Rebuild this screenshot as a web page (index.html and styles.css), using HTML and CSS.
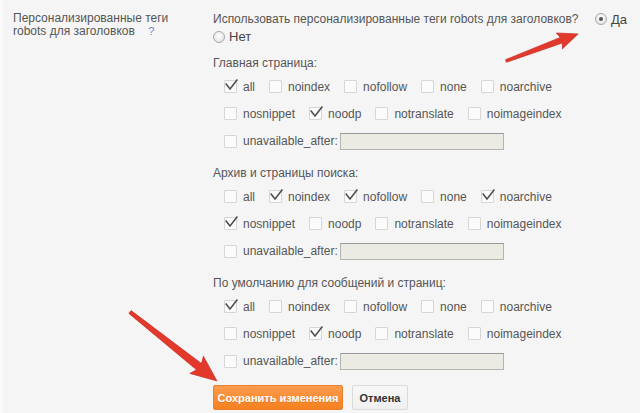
FILE: index.html
```html
<!DOCTYPE html>
<html lang="ru">
<head>
    <meta charset="UTF-8">
    <title>Персонализированные теги robots</title>
    <link rel="stylesheet" href="styles.css">
</head>
<body>
    <div class="page">
        <div class="setting">
            <div class="setting-label">
                Персонализированные теги<br>robots для заголовков <a class="help" href="#">?</a>
            </div>

            <div class="setting-body">
                <div class="question">
                    <span>Использовать персонализированные теги robots для заголовков?</span>
                    <label class="radio-item"><span class="radio is-checked"></span>Да</label>
                </div>
                <div class="question-no">
                    <label class="radio-item"><span class="radio"></span>Нет</label>
                </div>

                <!-- Главная страница -->
                <div class="section">
                    <div class="section-title">Главная страница:</div>
                    <div class="opts">
                        <div class="opt-row">
                            <label class="opt"><span class="cb is-checked"><svg viewBox="0 0 16 16"><path d="M2.7 6.6 L7 12 L14.4 2.6"/></svg></span>all</label>
                            <label class="opt"><span class="cb"></span>noindex</label>
                            <label class="opt"><span class="cb"></span>nofollow</label>
                            <label class="opt"><span class="cb"></span>none</label>
                            <label class="opt"><span class="cb"></span>noarchive</label>
                        </div>
                        <div class="opt-row">
                            <label class="opt"><span class="cb"></span>nosnippet</label>
                            <label class="opt"><span class="cb is-checked"><svg viewBox="0 0 16 16"><path d="M2.7 6.6 L7 12 L14.4 2.6"/></svg></span>noodp</label>
                            <label class="opt"><span class="cb"></span>notranslate</label>
                            <label class="opt"><span class="cb"></span>noimageindex</label>
                        </div>
                        <div class="opt-row opt-row-date">
                            <label class="opt opt-date"><span class="cb"></span>unavailable_after:</label>
                            <span class="date-input"></span>
                        </div>
                    </div>
                </div>

                <!-- Архив и страницы поиска -->
                <div class="section">
                    <div class="section-title">Архив и страницы поиска:</div>
                    <div class="opts">
                        <div class="opt-row">
                            <label class="opt"><span class="cb"></span>all</label>
                            <label class="opt"><span class="cb is-checked"><svg viewBox="0 0 16 16"><path d="M2.7 6.6 L7 12 L14.4 2.6"/></svg></span>noindex</label>
                            <label class="opt"><span class="cb is-checked"><svg viewBox="0 0 16 16"><path d="M2.7 6.6 L7 12 L14.4 2.6"/></svg></span>nofollow</label>
                            <label class="opt"><span class="cb"></span>none</label>
                            <label class="opt"><span class="cb is-checked"><svg viewBox="0 0 16 16"><path d="M2.7 6.6 L7 12 L14.4 2.6"/></svg></span>noarchive</label>
                        </div>
                        <div class="opt-row">
                            <label class="opt"><span class="cb is-checked"><svg viewBox="0 0 16 16"><path d="M2.7 6.6 L7 12 L14.4 2.6"/></svg></span>nosnippet</label>
                            <label class="opt"><span class="cb"></span>noodp</label>
                            <label class="opt"><span class="cb"></span>notranslate</label>
                            <label class="opt"><span class="cb"></span>noimageindex</label>
                        </div>
                        <div class="opt-row opt-row-date">
                            <label class="opt opt-date"><span class="cb"></span>unavailable_after:</label>
                            <span class="date-input"></span>
                        </div>
                    </div>
                </div>

                <!-- По умолчанию для сообщений и страниц -->
                <div class="section">
                    <div class="section-title">По умолчанию для сообщений и страниц:</div>
                    <div class="opts">
                        <div class="opt-row">
                            <label class="opt"><span class="cb is-checked"><svg viewBox="0 0 16 16"><path d="M2.7 6.6 L7 12 L14.4 2.6"/></svg></span>all</label>
                            <label class="opt"><span class="cb"></span>noindex</label>
                            <label class="opt"><span class="cb"></span>nofollow</label>
                            <label class="opt"><span class="cb"></span>none</label>
                            <label class="opt"><span class="cb"></span>noarchive</label>
                        </div>
                        <div class="opt-row">
                            <label class="opt"><span class="cb"></span>nosnippet</label>
                            <label class="opt"><span class="cb is-checked"><svg viewBox="0 0 16 16"><path d="M2.7 6.6 L7 12 L14.4 2.6"/></svg></span>noodp</label>
                            <label class="opt"><span class="cb"></span>notranslate</label>
                            <label class="opt"><span class="cb"></span>noimageindex</label>
                        </div>
                        <div class="opt-row opt-row-date">
                            <label class="opt opt-date"><span class="cb"></span>unavailable_after:</label>
                            <span class="date-input"></span>
                        </div>
                    </div>
                </div>

                <div class="buttons">
                    <button class="btn btn-save">Сохранить изменения</button>
                    <button class="btn btn-cancel">Отмена</button>
                </div>
            </div>
        </div>

        <!-- Red annotation arrows drawn over the screenshot -->
        <svg class="arrows" width="640" height="413" viewBox="0 0 640 413">
            <g transform="translate(506 61) rotate(-20.6)">
                <polygon points="0,-1.4 59,-3 57,-8.5 77,0 57,8.5 59,3 0,1.4" fill="#e2392c" stroke="#c32a20" stroke-width="0.6"/>
            </g>
            <g transform="translate(130 312) rotate(38.4)">
                <polygon points="0,-1.8 88,-4 85,-11 111,0 85,11 88,4 0,1.8" fill="#e2392c" stroke="#c32a20" stroke-width="0.6"/>
            </g>
        </svg>
    </div>
</body>
</html>
```

FILE: styles.css
```css
body {
    margin: 0;
    background-color: #f5f5f5;
    font-family: Arial, 'Liberation Sans', sans-serif;
    font-size: 12px;
    color: #555;
}
.page {
    position: relative;
    width: 640px;
    height: 413px;
    overflow: hidden;
    border-left: 3px solid #fbfbfb;
    box-sizing: border-box;
}
.setting {
    display: flex;
    padding-top: 10px;
}
.setting-label {
    width: 210px;
    padding-left: 10px;
    box-sizing: border-box;
    line-height: 13px;
    padding-top: 2px;
}
.help {
    margin-left: 10px;
    color: #6c84d8;
    text-decoration: none;
    font-size: 11px;
}
.setting-body {
    flex: 1;
}
/* Question with the Да / Нет radios */
.question {
    display: flex;
    align-items: center;
    height: 18px;
    padding-right: 13px;
}
.question .radio-item {
    margin-left: auto;
}
.question-no {
    display: flex;
    align-items: center;
    height: 17px;
}
.radio-item {
    display: inline-flex;
    align-items: center;
    font-size: 13px;
    color: #444;
}
.radio {
    display: inline-block;
    position: relative;
    width: 10px;
    height: 10px;
    border: 1px solid #a8a8a8;
    border-radius: 50%;
    background: radial-gradient(circle at 50% 40%, #ffffff, #dcdcdc);
    margin-right: 4px;
}
.radio.is-checked::after {
    content: "";
    position: absolute;
    left: 3px;
    top: 3px;
    width: 4px;
    height: 4px;
    border-radius: 50%;
    background-color: #555;
}
/* Sections of robots tags */
.section {
    margin-top: 10px;
}
.section-title {
    height: 16px;
    line-height: 16px;
}
.opts {
    margin-top: 2px;
    padding-left: 11px;
}
.opt-row {
    display: flex;
    align-items: center;
    height: 27px;
}
.opt-row-date {
    height: 28px;
}
.opt {
    display: inline-flex;
    align-items: center;
    margin-right: 14px;
}
.opt-date {
    margin-right: 2px;
}
.cb {
    display: inline-block;
    position: relative;
    width: 11px;
    height: 11px;
    border: 1px solid #d6d6d6;
    border-radius: 1px;
    background-color: #fbfbfb;
    margin-right: 6px;
}
.cb svg {
    position: absolute;
    left: -2px;
    top: -4px;
    width: 16px;
    height: 16px;
    fill: none;
    stroke: #505050;
    stroke-width: 1.6;
}
.date-input {
    display: inline-block;
    width: 162px;
    height: 15px;
    background-color: #ebebe4;
    border: 1px solid #b4b4ae;
    border-top-color: #999;
}
/* Buttons */
.buttons {
    display: flex;
    gap: 9px;
    margin-top: 10px;
}
.btn {
    height: 25px;
    padding: 0;
    font-family: Arial, 'Liberation Sans', sans-serif;
    font-size: 11px;
    font-weight: bold;
    border-radius: 2px;
}
.btn-save {
    width: 130px;
    color: #fff;
    background: linear-gradient(#fd9b4c, #f6801f);
    border: 1px solid #e8802d;
    text-shadow: 0 1px 0 rgba(180, 80, 0, 0.3);
}
.btn-cancel {
    width: 56px;
    color: #333;
    background: linear-gradient(#f7f7f7, #f0f0f0);
    border: 1px solid #dadada;
}
.arrows {
    position: absolute;
    left: -3px;
    top: 0;
}
```
